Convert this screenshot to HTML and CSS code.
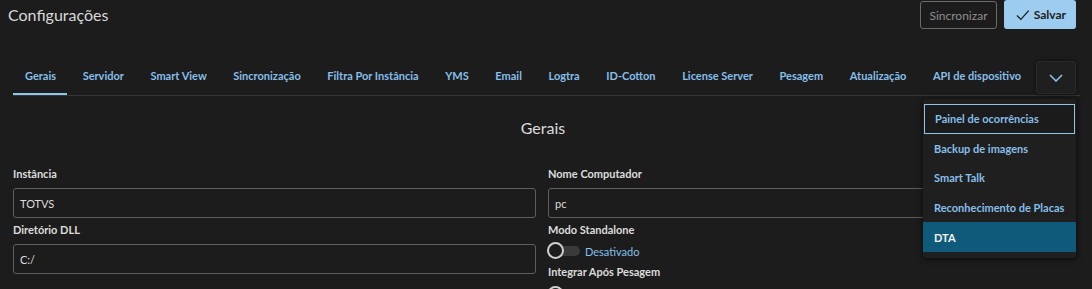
FILE: index.html
```html
<!DOCTYPE html>
<html lang="pt">
<head>
<meta charset="utf-8">
<title>Configurações</title>
<link rel="stylesheet" href="styles.css">
</head>
<body>
<header class="header">
  <h1 class="title">Configurações</h1>
  <div class="actions">
    <button class="btn btn-outline">Sincronizar</button>
    <button class="btn btn-primary"><svg class="check" width="14" height="12" viewBox="0 0 14 12"><path d="M1 6.5 L5 10.5 L13 1.5" fill="none" stroke="#1c1c1c" stroke-width="1.3"/></svg>Salvar</button>
  </div>
</header>
<nav class="tabs">
  <a class="tab active">Gerais</a>
  <a class="tab">Servidor</a>
  <a class="tab">Smart View</a>
  <a class="tab">Sincronização</a>
  <a class="tab">Filtra Por Instância</a>
  <a class="tab">YMS</a>
  <a class="tab">Email</a>
  <a class="tab">Logtra</a>
  <a class="tab">ID-Cotton</a>
  <a class="tab">License Server</a>
  <a class="tab">Pesagem</a>
  <a class="tab">Atualização</a>
  <a class="tab">API de dispositivo</a>
  <button class="more"><svg width="14" height="8" viewBox="0 0 14 8"><path d="M1 1 L7 7 L13 1" fill="none" stroke="#8cc4ee" stroke-width="1.5"/></svg></button>
</nav>
<ul class="menu">
  <li class="menu-item focused">Painel de ocorrências</li>
  <li class="menu-item">Backup de imagens</li>
  <li class="menu-item">Smart Talk</li>
  <li class="menu-item">Reconhecimento de Placas</li>
  <li class="menu-item selected">DTA</li>
</ul>
<main class="content">
  <h2 class="section-title">Gerais</h2>
  <div class="form">
    <div class="col">
      <label class="label">Instância</label>
      <div class="input">TOTVS</div>
      <label class="label">Diretório DLL</label>
      <div class="input">C:/</div>
    </div>
    <div class="col">
      <label class="label">Nome Computador</label>
      <div class="input">pc</div>
      <label class="label">Modo Standalone</label>
      <div class="switch-row"><span class="switch"><span class="knob"></span></span><span class="switch-text">Desativado</span></div>
      <label class="label">Integrar Após Pesagem</label>
      <div class="switch-row last"><span class="switch"><span class="knob"></span></span><span class="switch-text">Desativado</span></div>
    </div>
  </div>
</main>
</body>
</html>
```
FILE: styles.css
```css
* { box-sizing: border-box; }
html, body { margin: 0; padding: 0; }
body {
  background: #1c1c1c;
  font-family: Lato, "Noto Sans", sans-serif;
  color: #dcdcdc;
  width: 1092px;
  height: 289px;
  overflow: hidden;
  position: relative;
}
.header {
  display: flex;
  justify-content: space-between;
  align-items: flex-start;
  height: 30px;
  padding: 0 16px 0 8px;
}
.title {
  margin: 4px 0 0 0;
  font-size: 16px;
  font-weight: 400;
  line-height: 22px;
  color: #d8d8d8;
}
.actions { display: flex; gap: 7px; }
.btn {
  font-family: inherit;
  font-size: 12px;
  height: 29px;
  border-radius: 3px;
  padding: 0 10px;
  display: flex;
  align-items: center;
}
.btn-outline {
  margin-top: 1px;
  height: 28px;
  background: #1c1c1c;
  border: 1px solid #6a6a6a;
  color: #8e8e8e;
  width: 77px;
  justify-content: center;
}
.btn-primary {
  background: #9ccdf0;
  border: 0;
  color: #1c1c1c;
  font-weight: 700;
  width: 72px;
  padding-left: 12px;
  gap: 4px;
}
.tabs {
  margin-top: 30px;
  margin-left: 13px;
  margin-right: 12px;
  height: 36px;
  display: flex;
  align-items: stretch;
  border-bottom: 1px solid #363636;
  position: relative;
}
.tab {
  display: flex;
  align-items: center;
  padding: 0 14.58px 2px 12px;
  font-size: 11px;
  font-weight: 700;
  color: #86bfe9;
  border-bottom: 2px solid transparent;
  white-space: nowrap;
}
.tab.active { border-bottom-color: #8ec4ea; padding-right: 11px; margin-right: 3.58px; }
.more {
  margin-left: 0;
  margin-top: 1px;
  width: 40px;
  height: 33px;
  background: #1f1f1f;
  border: 1px solid #2a2a2a;
  border-radius: 3px;
  box-shadow: 0 0 4px rgba(0,0,0,0.6);
  display: flex;
  align-items: center;
  justify-content: center;
  padding: 0;
}
.menu {
  position: absolute;
  left: 923px;
  top: 99px;
  width: 153px;
  margin: 0;
  padding: 5px 0 6px 0;
  list-style: none;
  background: #1f1f1f;
  border-radius: 3px;
  box-shadow: 0 1px 6px rgba(0,0,0,0.7);
  z-index: 2;
}
.menu-item {
  height: 29.6px;
  display: flex;
  align-items: center;
  padding: 0 11px;
  font-size: 11px;
  font-weight: 700;
  color: #86bfe9;
  white-space: nowrap;
}
.menu-item.focused {
  border: 1px solid #8ec4ea;
  margin: 0 1px;
  padding-left: 10px;
  background: #1b1b1b;
}
.menu-item.selected {
  background: #0f5a7a;
  color: #f2f2f2;
}
.content { padding: 21px 13px 0 13px; }
.section-title {
  margin: 0;
  text-align: center;
  font-size: 16px;
  font-weight: 400;
  line-height: 22px;
  color: #dcdcdc;
  padding-right: 6px;
}
.form {
  margin-top: 27px;
  display: grid;
  grid-template-columns: 523px 523px;
  column-gap: 12px;
}
.col { display: flex; flex-direction: column; }
.label {
  font-size: 11px;
  font-weight: 700;
  line-height: 16px;
  color: #dcdcdc;
  height: 16px;
}
.input {
  margin-top: 6px;
  margin-bottom: 4px;
  height: 30px;
  border: 1px solid #5e5e5e;
  border-radius: 3px;
  background: #1c1c1c;
  display: flex;
  align-items: center;
  padding: 0 6px;
  font-size: 11px;
  color: #dcdcdc;
}
.switch-row {
  display: flex;
  align-items: center;
  height: 26px;
  gap: 5px;
}
.switch-row.last { margin-top: 2px; }
.switch {
  position: relative;
  width: 32px;
  height: 10px;
  border-radius: 5px;
  background: #3a3a3a;
}
.knob {
  position: absolute;
  left: -1px;
  top: -4px;
  width: 17px;
  height: 17px;
  border-radius: 50%;
  border: 2px solid #d0d0d0;
  background: #1c1c1c;
}
.switch-text {
  font-size: 11px;
  color: #86bfe9;
}
```
